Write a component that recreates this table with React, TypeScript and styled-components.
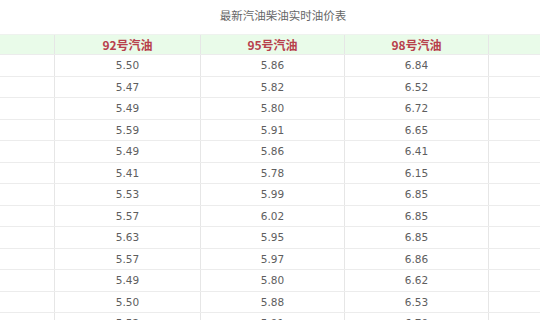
import styled, { createGlobalStyle } from 'styled-components';

const GlobalStyle = createGlobalStyle`
  html, body {
    margin: 0;
    padding: 0;
    background: #ffffff;
  }
  body {
    width: 540px;
    height: 320px;
    overflow: hidden;
    font-family: "DejaVu Sans", "Noto Sans CJK SC", sans-serif;
  }
`;

const Page = styled.div`
  width: 540px;
  height: 320px;
  overflow: hidden;
  background: #fff;
`;

const Title = styled.div`
  height: 34px;
  box-sizing: border-box;
  padding: 8px 0 0 26px;
  text-align: center;
  font-family: "Noto Sans CJK SC", sans-serif;
  font-size: 11.5px;
  line-height: 14px;
  color: #666;
`;

const Table = styled.div`
  width: 640px;
  display: flex;
  flex-direction: column;
`;

const Row = styled.div<{ $head?: boolean }>`
  display: grid;
  grid-template-columns: 54px 146px 144px 144px 152px;
  height: ${(p) => (p.$head ? '21px' : '21.5px')};
  box-sizing: border-box;
  background: ${(p) => (p.$head ? '#e9fbe9' : '#fff')};
  border-top: ${(p) => (p.$head ? '1px solid #eef2ee' : 'none')};
  border-bottom: 1px solid #ececec;
`;

const Cell = styled.div<{ $head?: boolean }>`
  display: flex;
  align-items: center;
  justify-content: center;
  border-left: 1px solid #e6e6e6;
  font-size: ${(p) => (p.$head ? '12px' : '10.5px')};
  font-weight: ${(p) => (p.$head ? 700 : 400)};
  font-family: ${(p) =>
    p.$head ? '"Noto Sans CJK SC", sans-serif' : '"DejaVu Sans", sans-serif'};
  color: ${(p) => (p.$head ? '#b8404c' : '#5e5e5e')};
  &:first-child {
    border-left: none;
  }
`;

const heads = ['92号汽油', '95号汽油', '98号汽油'];

const prices: [string, string, string][] = [
  ['5.50', '5.86', '6.84'],
  ['5.47', '5.82', '6.52'],
  ['5.49', '5.80', '6.72'],
  ['5.59', '5.91', '6.65'],
  ['5.49', '5.86', '6.41'],
  ['5.41', '5.78', '6.15'],
  ['5.53', '5.99', '6.85'],
  ['5.57', '6.02', '6.85'],
  ['5.63', '5.95', '6.85'],
  ['5.57', '5.97', '6.86'],
  ['5.49', '5.80', '6.62'],
  ['5.50', '5.88', '6.53'],
  ['5.52', '5.91', '6.70'],
];

export default function App() {
  return (
    <Page>
      <GlobalStyle />
      <Title>最新汽油柴油实时油价表</Title>
      <Table>
        <Row $head>
          <Cell $head />
          {heads.map((h) => (
            <Cell $head key={h}>{h}</Cell>
          ))}
          <Cell $head />
        </Row>
        {prices.map((r, i) => (
          <Row key={i}>
            <Cell />
            {r.map((v, j) => (
              <Cell key={j}>{v}</Cell>
            ))}
            <Cell />
          </Row>
        ))}
      </Table>
    </Page>
  );
}
